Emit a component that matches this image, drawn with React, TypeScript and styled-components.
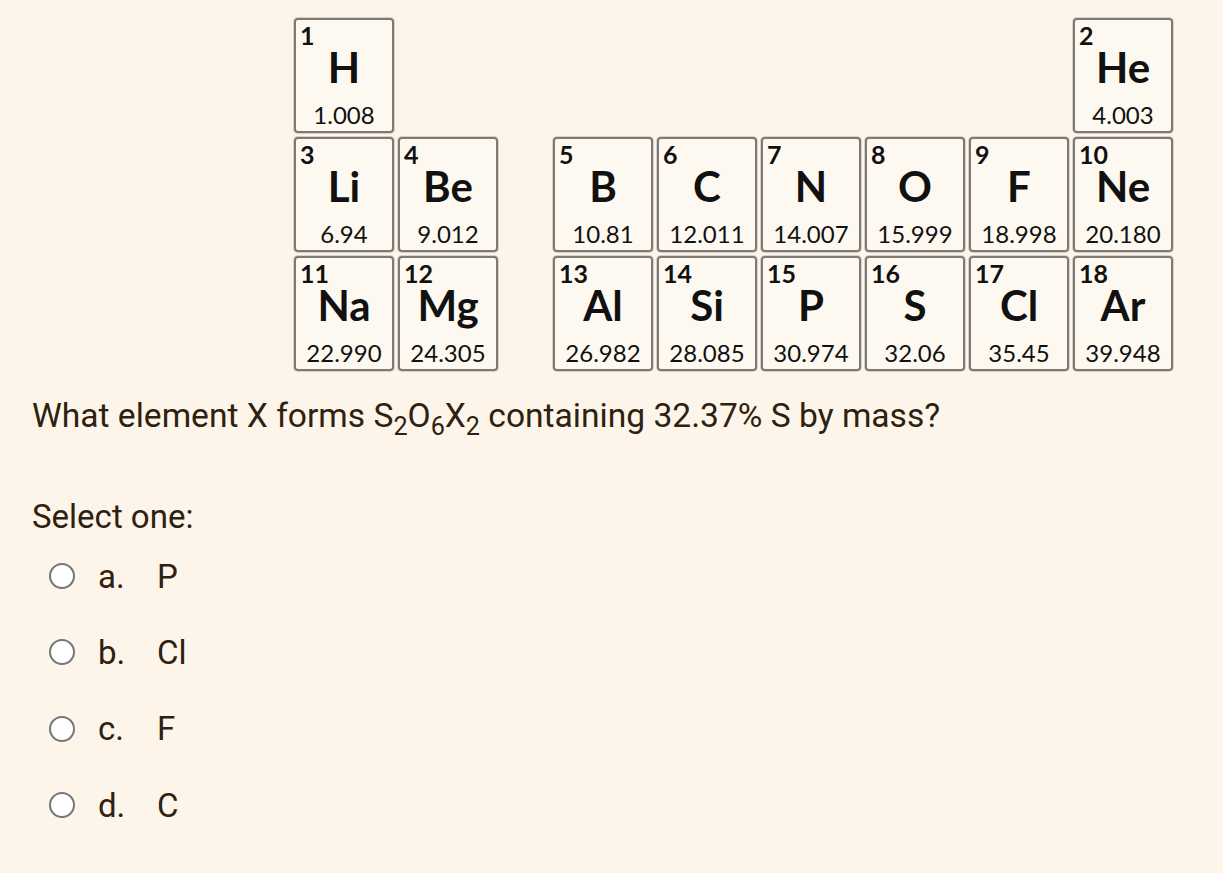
import { FC } from "react";
import styled, { createGlobalStyle } from "styled-components";

interface Element {
  z: number;
  symbol: string;
  mass: string;
  row: number;
  col: number;
}

const elements: Element[] = [
  { z: 1, symbol: "H", mass: "1.008", row: 1, col: 1 },
  { z: 2, symbol: "He", mass: "4.003", row: 1, col: 9 },
  { z: 3, symbol: "Li", mass: "6.94", row: 2, col: 1 },
  { z: 4, symbol: "Be", mass: "9.012", row: 2, col: 2 },
  { z: 5, symbol: "B", mass: "10.81", row: 2, col: 4 },
  { z: 6, symbol: "C", mass: "12.011", row: 2, col: 5 },
  { z: 7, symbol: "N", mass: "14.007", row: 2, col: 6 },
  { z: 8, symbol: "O", mass: "15.999", row: 2, col: 7 },
  { z: 9, symbol: "F", mass: "18.998", row: 2, col: 8 },
  { z: 10, symbol: "Ne", mass: "20.180", row: 2, col: 9 },
  { z: 11, symbol: "Na", mass: "22.990", row: 3, col: 1 },
  { z: 12, symbol: "Mg", mass: "24.305", row: 3, col: 2 },
  { z: 13, symbol: "Al", mass: "26.982", row: 3, col: 4 },
  { z: 14, symbol: "Si", mass: "28.085", row: 3, col: 5 },
  { z: 15, symbol: "P", mass: "30.974", row: 3, col: 6 },
  { z: 16, symbol: "S", mass: "32.06", row: 3, col: 7 },
  { z: 17, symbol: "Cl", mass: "35.45", row: 3, col: 8 },
  { z: 18, symbol: "Ar", mass: "39.948", row: 3, col: 9 },
];

const answers = [
  { letter: "a.", text: "P" },
  { letter: "b.", text: "Cl" },
  { letter: "c.", text: "F" },
  { letter: "d.", text: "C" },
];

const App: FC = () => {
  return (
    <Page>
      <GlobalStyle />
      <Table>
        {elements.map((el) => (
          <Cell key={el.z} $row={el.row} $col={el.col}>
            <Number>{el.z}</Number>
            <Symbol>{el.symbol}</Symbol>
            <Mass>{el.mass}</Mass>
          </Cell>
        ))}
      </Table>

      <Question>
        What element X forms S<sub>2</sub>O<sub>6</sub>X<sub>2</sub> containing
        32.37% S by mass?
      </Question>

      <Prompt>Select one:</Prompt>
      <Options>
        {answers.map((a) => (
          <Option key={a.letter}>
            <Radio type="radio" name="answer" />
            <Letter>{a.letter}</Letter>
            <Answer>{a.text}</Answer>
          </Option>
        ))}
      </Options>
    </Page>
  );
};

export default App;

const GlobalStyle = createGlobalStyle`
  html, body {
    margin: 0;
    background: #fdf5e9;
  }
  body {
    font-family: Roboto, "Liberation Sans", sans-serif;
    color: #2e2110;
  }
`;

const Page = styled.div`
  padding: 18px 0 0 32px;
  min-height: 855px;
`;

const Table = styled.div`
  display: grid;
  grid-template-columns: 100px 100px 47px repeat(6, 100px);
  grid-template-rows: repeat(3, 115px);
  column-gap: 4px;
  row-gap: 4px;
  margin-left: 262px;
  width: max-content;
`;

const Cell = styled.div<{ $row: number; $col: number }>`
  grid-row: ${(p) => p.$row};
  grid-column: ${(p) => p.$col};
  display: flex;
  flex-direction: column;
  box-sizing: border-box;
  border: 2px solid #7e7973;
  border-radius: 4px;
  box-shadow: 0 0 0 1px #d6d1c9;
  background: #fef9f0;
  padding: 0 4px;
  font-family: Lato, "Open Sans", sans-serif;
  color: #111;
`;

const Number = styled.div`
  margin-top: 4px;
  font-size: 25px;
  line-height: 23px;
  font-weight: 700;
`;

const Symbol = styled.div`
  margin-top: 1px;
  font-size: 42px;
  line-height: 38px;
  font-weight: 700;
  text-align: center;
`;

const Mass = styled.div`
  margin-top: 17px;
  font-size: 24px;
  line-height: 24px;
  text-align: center;
`;

const Question = styled.p`
  margin: 21px 0 0;
  font-size: 33.6px;
  line-height: 48px;

  sub {
    font-size: 0.75em;
    line-height: 0;
  }
`;

const Prompt = styled.div`
  margin-top: 55px;
  font-size: 33px;
  line-height: 43px;
`;

const Options = styled.div`
  display: flex;
  flex-direction: column;
`;

const Option = styled.label`
  display: flex;
  align-items: center;
  height: 76.3px;
  padding-left: 17px;
  font-size: 33px;
`;

const Radio = styled.input`
  appearance: none;
  box-sizing: border-box;
  width: 26px;
  height: 26px;
  margin: 0 23px 0 0;
  border: 2px solid #767676;
  border-radius: 50%;
  background: #fff;
`;

const Letter = styled.span`
  min-width: 59px;
`;

const Answer = styled.span``;
